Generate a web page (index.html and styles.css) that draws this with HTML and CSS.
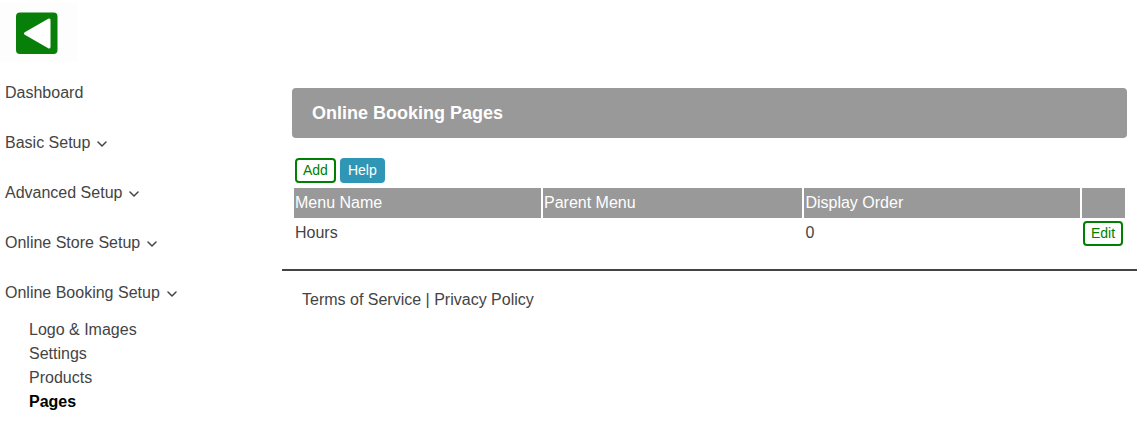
FILE: index.html
```html
<!DOCTYPE html>
<html lang="en">
<head>
    <meta charset="utf-8">
    <title>Online Booking Pages</title>
    <link rel="stylesheet" href="styles.css">
</head>
<body>
    <svg width="0" height="0" class="symbols" aria-hidden="true">
        <symbol id="chevron" viewBox="0 0 10 6">
            <path d="M1 1l4 4 4-4" fill="none" stroke="currentColor" stroke-width="1.5" stroke-linecap="round" stroke-linejoin="round"/>
        </symbol>
    </svg>

    <header class="topbar">
        <a href="#" class="logo" aria-label="Home">
            <svg width="42" height="42" viewBox="0 0 42 42">
                <rect x="0" y="0.500" width="41.500" height="41.500" rx="4" fill="#087f08"/>
                <path d="M9.500 21.500L33 8V35Z" fill="#fff" stroke="#fff" stroke-width="3" stroke-linejoin="round"/>
            </svg>
        </a>
    </header>

    <div class="layout">
        <nav class="sidebar">
            <ul class="menu">
                <li><a href="#">Dashboard</a></li>
                <li><a href="#">Basic Setup <svg class="chevron"><use href="#chevron"/></svg></a></li>
                <li><a href="#">Advanced Setup <svg class="chevron"><use href="#chevron"/></svg></a></li>
                <li><a href="#">Online Store Setup <svg class="chevron"><use href="#chevron"/></svg></a></li>
                <li>
                    <a href="#">Online Booking Setup <svg class="chevron"><use href="#chevron"/></svg></a>
                    <ul class="submenu">
                        <li><a href="#">Logo &amp; Images</a></li>
                        <li><a href="#">Settings</a></li>
                        <li><a href="#">Products</a></li>
                        <li><a href="#" class="active">Pages</a></li>
                    </ul>
                </li>
            </ul>
        </nav>

        <div class="content">
            <main class="panel">
                <h1 class="title">Online Booking Pages</h1>
                <div class="actions">
                    <button type="button" class="btn">Add</button>
                    <button type="button" class="btn btn-help">Help</button>
                </div>
                <table class="grid">
                    <thead>
                        <tr>
                            <th class="col-name">Menu Name</th>
                            <th class="col-parent">Parent Menu</th>
                            <th>Display Order</th>
                            <th class="col-edit"></th>
                        </tr>
                    </thead>
                    <tbody>
                        <tr>
                            <td>Hours</td>
                            <td></td>
                            <td>0</td>
                            <td><button type="button" class="btn">Edit</button></td>
                        </tr>
                    </tbody>
                </table>
            </main>
            <footer class="footer">
                <a href="#">Terms of Service</a> | <a href="#">Privacy Policy</a>
            </footer>
        </div>
    </div>
</body>
</html>
```

FILE: styles.css
```css
body { margin: 0; background: #fff; color: #444; font-family: "Liberation Sans", Arial, sans-serif; font-size: 16px; line-height: 24px; }
a { color: inherit; text-decoration: none; }
ul { list-style: none; margin: 0; padding: 0; }
.symbols { display: block; }

.topbar { display: flex; padding: 3px 0 6px; }
.logo { display: block; padding: 9px 19px 8px 16px; background: #fdfdfd; }
.logo svg { display: block; }

.layout { display: flex; align-items: flex-start; padding: 0 10px 0 5px; }
.sidebar { flex: 0 0 277px; }
.menu > li > a { display: flex; align-items: center; gap: 7px; line-height: 50px; }
.chevron { width: 10px; height: 6px; margin-top: 2px; }
.submenu { padding-left: 24px; }
.submenu a { display: block; }
.active { color: #000; font-weight: bold; }

.content { flex: 1; min-width: 0; padding-top: 20px; }
.panel { padding: 0 10px 20px; }
.title { margin: 0 0 20px; padding: 13px 20px; border-radius: 4px; background: #999; color: #fff; font-size: 18px; line-height: 24px; }
.actions { display: flex; gap: 4px; padding: 0 3px 3px; }
.btn { display: block; height: 25px; padding: 0 6px 1px; border: 2px solid #008000; border-radius: 4px; background: #fff; color: #008000; font-family: inherit; font-size: 14px; line-height: 20px; }
.btn-help { border-color: #3096b6; background: #3096b6; color: #fff; }

.grid { width: 100%; table-layout: fixed; border-spacing: 2px; }
.grid th { height: 28px; padding: 1px; background: #999; color: #fff; font-weight: normal; text-align: left; }
.grid td { padding: 1px; vertical-align: top; }
.col-name { width: 29.7%; }
.col-parent { width: 31.2%; }
.grid .col-edit { width: 41px; }

.footer { padding: 17px 20px; border-top: 2px solid #444; }
```
